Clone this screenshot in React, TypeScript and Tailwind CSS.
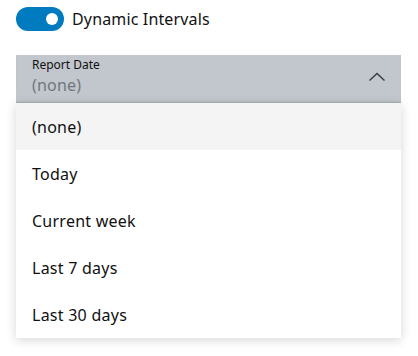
import React from 'react';

const OPTIONS = ['(none)', 'Today', 'Current week', 'Last 7 days', 'Last 30 days'];

const Toggle: React.FC = () => (
  <div className="relative h-6 w-12 rounded-full bg-[#007bc0]">
    <div className="absolute right-[6px] top-[6px] h-3 w-3 rounded-full bg-white" />
  </div>
);

export default function App() {
  return (
    <div className="h-[356px] w-[418px] bg-white px-4 pt-[7px] font-['Noto_Sans',sans-serif] text-[#111]">
      <div className="flex items-center gap-2">
        <Toggle />
        <span className="text-base leading-6 tracking-[0.15px]">Dynamic Intervals</span>
      </div>
      <div className="mt-6 w-[385px]">
        <div className="flex h-12 items-start justify-between bg-[#c1c7cc] pl-4 pt-[2px] shadow-[inset_0_-2px_2px_-1px_rgba(0,0,0,0.15)]">
          <div className="flex flex-col">
            <span className="text-xs leading-4">Report Date</span>
            <span className="text-base leading-6 tracking-[0.2px] text-[#71767c]">(none)</span>
          </div>
          <svg width="16" height="10" viewBox="0 0 16 10" fill="none" className="mr-4 mt-[15px]">
            <path d="M0.5 8.5 L8 1.5 L15.5 8.5" stroke="#3a3f44" strokeWidth="1.5" />
          </svg>
        </div>
        <ul className="bg-white shadow-[0_2px_10px_rgba(0,0,0,0.16)]">
          {OPTIONS.map((o, i) => (
            <li
              key={o}
              className={`flex h-[47px] items-center px-4 text-base tracking-[0.25px] ${i === 0 ? 'bg-[#f4f4f4]' : ''}`}
            >
              {o}
            </li>
          ))}
        </ul>
      </div>
    </div>
  );
}
